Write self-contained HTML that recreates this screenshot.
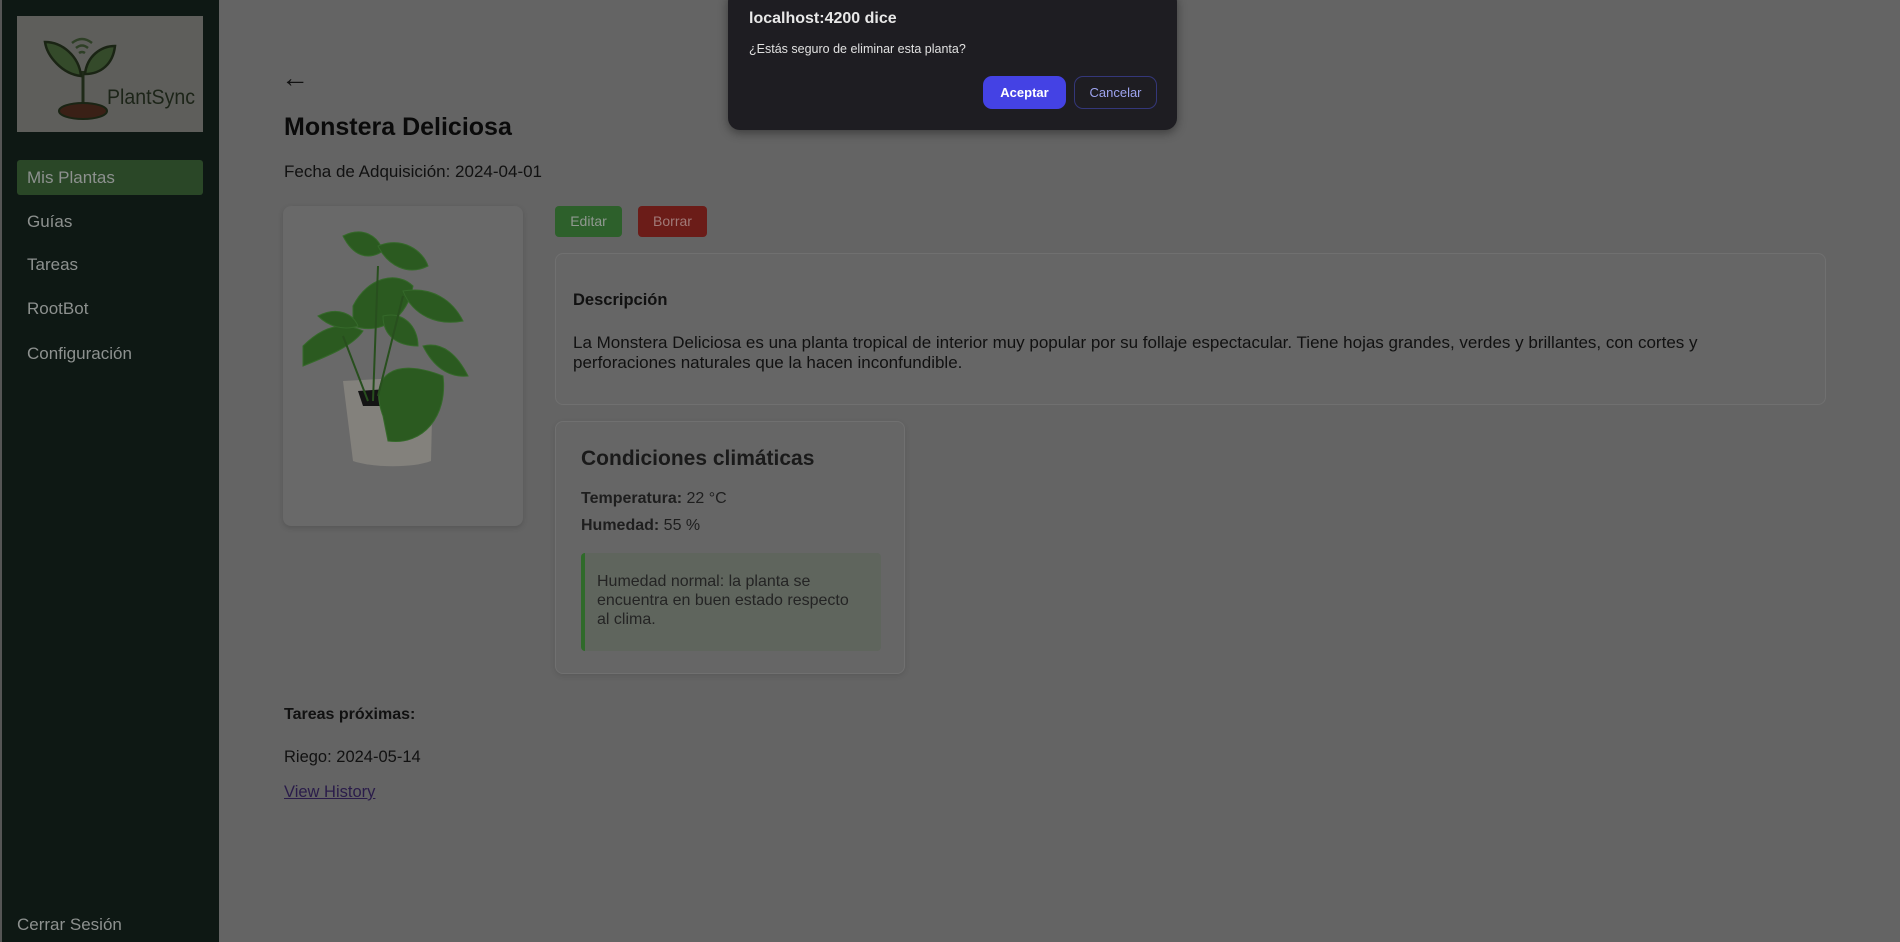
<!DOCTYPE html>
<html><head><meta charset="utf-8"><style>
*{margin:0;padding:0;box-sizing:border-box}
body{width:1900px;height:942px;overflow:hidden;background:#646464;font-family:"Liberation Sans",sans-serif;position:relative;color:#111}
.a{position:absolute;white-space:nowrap}
#side{position:absolute;left:0;top:0;width:219px;height:942px;background:#0e1814;border-left:2px solid #555}
.nav{position:absolute;left:25px;font-size:17px;color:#8d918f}
.card{position:absolute;border:1px solid #707070;border-radius:8px;background:#666}
</style></head><body>
<div id="side">
  <div class="a" style="left:15px;top:16px;width:186px;height:116px;background:#5e5e5b;overflow:hidden">
    <svg width="186" height="116" viewBox="0 0 186 116">
      <path d="M55 27 q10 -8 20 0 M59 32 q6 -5 12 0 M62 37 q3 -2 6 0" stroke="#2e3f26" stroke-width="2.5" fill="none"/>
      <path d="M66 95 L66 55" stroke="#1f2a18" stroke-width="3"/>
      <path d="M64 60 C45 58 30 40 28 26 C45 26 62 40 64 60Z" fill="#344a2a" stroke="#1a2414" stroke-width="2.5"/>
      <path d="M68 58 C70 40 84 30 98 30 C96 48 84 58 68 58Z" fill="#344a2a" stroke="#1a2414" stroke-width="2.5"/>
      <ellipse cx="66" cy="95" rx="24" ry="8" fill="#3a2016" stroke="#1a2414" stroke-width="2"/>
      <text x="90" y="88" font-family="Liberation Sans" font-size="21" textLength="88" lengthAdjust="spacingAndGlyphs" fill="#1c2418">PlantSync</text>
    </svg>
  </div>
  <div class="a" style="left:15px;top:160px;width:186px;height:35px;background:#2a4727;border-radius:3px"></div>
  <div class="nav a" style="top:168px">Mis Plantas</div>
  <div class="nav a" style="top:212px">Guías</div>
  <div class="nav a" style="top:255px">Tareas</div>
  <div class="nav a" style="top:299px">RootBot</div>
  <div class="nav a" style="top:344px">Configuración</div>
  <div class="nav a" style="left:15px;top:915px">Cerrar Sesión</div>
</div>

<div class="a" style="left:281px;top:62px;font-size:28px;color:#111">&#8592;</div>
<div class="a" style="left:284px;top:113px;font-size:25px;font-weight:bold;color:#0a0a0a">Monstera Deliciosa</div>
<div class="a" style="left:284px;top:162px;font-size:17px;color:#111">Fecha de Adquisición: 2024-04-01</div>

<div class="a" style="left:283px;top:206px;width:240px;height:320px;background:#696969;border-radius:8px;box-shadow:0 2px 6px rgba(0,0,0,.15);overflow:hidden">
  <svg width="240" height="320" viewBox="0 0 240 320">
    <path d="M60 175 L150 170 L148 255 C130 262 90 262 70 255 Z" fill="#83817c"/>
    <path d="M75 185 L118 182 L118 200 L80 200Z" fill="#141414"/>
    <g fill="#2b5a20" stroke="#35692a" stroke-width="1">
      <path d="M100 210 C85 170 110 150 160 170 C165 210 140 240 105 235Z"/>
      <path d="M70 100 C85 70 115 65 130 80 C125 110 100 130 70 120Z"/>
      <path d="M20 140 C40 120 60 115 80 125 C70 140 45 150 20 160Z"/>
      <path d="M60 30 C80 20 95 30 100 45 C85 55 70 50 60 30Z"/>
      <path d="M95 40 C120 30 140 45 145 60 C125 70 105 60 95 40Z"/>
      <path d="M120 85 C150 80 170 95 180 115 C155 120 130 110 120 85Z"/>
      <path d="M100 110 C120 105 135 120 135 140 C115 140 100 130 100 110Z"/>
      <path d="M140 140 C160 135 175 150 185 170 C165 172 150 160 140 140Z"/>
      <path d="M35 110 C55 100 70 108 75 120 C60 125 45 120 35 110Z"/>
    </g>
    <path d="M90 195 L95 60 M95 190 L120 90 M85 195 L60 130" stroke="#284f1e" stroke-width="2" fill="none"/>
  </svg>
</div>

<div class="a" style="left:555px;top:206px;width:67px;height:31px;background:#2d602b;border-radius:4px;color:#909890;font-size:14px;text-align:center;line-height:31px">Editar</div>
<div class="a" style="left:638px;top:206px;width:69px;height:31px;background:#6b1c18;border-radius:4px;color:#a07a78;font-size:14px;text-align:center;line-height:31px">Borrar</div>

<div class="card" style="left:555px;top:253px;width:1271px;height:152px">
  <div class="a" style="left:17px;top:37px;font-size:16.5px;font-weight:bold">Descripción</div>
  <div class="a" style="left:17px;top:79px;font-size:17px;line-height:20px;white-space:normal;width:1200px">La Monstera Deliciosa es una planta tropical de interior muy popular por su follaje espectacular. Tiene hojas grandes, verdes y brillantes, con cortes y perforaciones naturales que la hacen inconfundible.</div>
</div>

<div class="card" style="left:555px;top:421px;width:350px;height:253px;box-shadow:0 2px 6px rgba(0,0,0,.1)">
  <div class="a" style="left:25px;top:25px;font-size:21px;font-weight:bold;color:#1a1a1a">Condiciones climáticas</div>
  <div class="a" style="left:25px;top:68px;font-size:16px;color:#1e1e1e"><b>Temperatura:</b> 22 °C</div>
  <div class="a" style="left:25px;top:95px;font-size:16px;color:#1e1e1e"><b>Humedad:</b> 55 %</div>
  <div class="a" style="left:25px;top:131px;width:300px;height:98px;background:#5f655d;border-left:4px solid #2f6a2a;border-radius:4px"></div>
  <div class="a" style="left:41px;top:150px;font-size:16px;line-height:19px;color:#242424;white-space:normal;width:258px">Humedad normal: la planta se encuentra en buen estado respecto al clima.</div>
</div>

<div class="a" style="left:284px;top:706px;font-size:16px;font-weight:bold">Tareas próximas:</div>
<div class="a" style="left:284px;top:748px;font-size:16.5px">Riego: 2024-05-14</div>
<div class="a" style="left:284px;top:783px;font-size:16.5px;color:#2a1c4a;text-decoration:underline">View History</div>

<div class="a" style="left:728px;top:-10px;width:449px;height:140px;background:#1e1d22;border-radius:12px;box-shadow:0 3px 10px rgba(0,0,0,.4)">
  <div class="a" style="left:21px;top:20px;font-size:16px;font-weight:bold;color:#e8e8e8">localhost:4200 dice</div>
  <div class="a" style="left:21px;top:52px;font-size:12.5px;color:#e0e0e0">¿Estás seguro de eliminar esta planta?</div>
  <div class="a" style="left:255px;top:86px;width:83px;height:33px;background:#4442e4;border-radius:9px;color:#fff;font-weight:bold;font-size:13px;text-align:center;line-height:33px">Aceptar</div>
  <div class="a" style="left:346px;top:86px;width:83px;height:33px;border:1px solid #34377a;border-radius:9px;color:#9da3ef;font-size:13px;text-align:center;line-height:31px">Cancelar</div>
</div>
</body></html>
